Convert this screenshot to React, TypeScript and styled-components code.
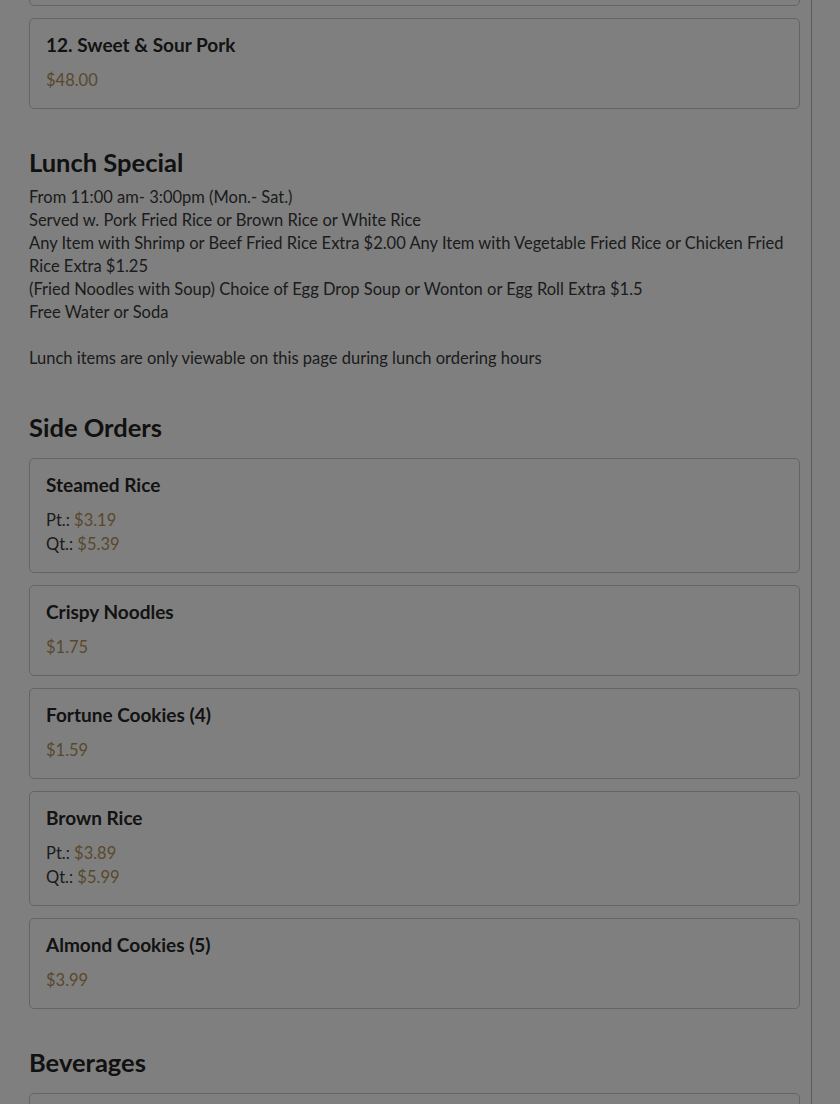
import React from 'react';
import styled, { createGlobalStyle } from 'styled-components';

const GlobalStyle = createGlobalStyle`
  html, body {
    margin: 0;
    padding: 0;
    background: #ffffff;
    font-family: 'Lato', 'Noto Sans', sans-serif;
    color: #383838;
    overflow: hidden;
  }
`;

const Page = styled.div`
  display: flex;
  min-height: 1104px;
`;

const MenuColumn = styled.main`
  box-sizing: border-box;
  width: 812px;
  flex-shrink: 0;
  padding: 0 11px 0 29px;
  border-right: 1px solid #b5b5b5;
  margin-top: -101px;
`;

const Section = styled.section`
  display: flex;
  flex-direction: column;
`;

const SectionTitle = styled.h2`
  margin: 38px 0 0;
  font-size: 25.5px;
  line-height: 30px;
  font-weight: 700;
  color: #222;
`;

const CardList = styled.div`
  display: flex;
  flex-direction: column;
  gap: 12px;
  margin-top: 16px;
`;

const Card = styled.div`
  border: 1px solid #c8c8c8;
  border-radius: 5px;
  padding: 14px 16px 16px;
  background: #fff;
`;

const ItemName = styled.h3`
  margin: 0 0 11px;
  font-size: 19px;
  line-height: 24px;
  font-weight: 700;
  color: #262626;
`;

const PriceRow = styled.div`
  font-size: 16.5px;
  line-height: 24px;
  color: #383838;
`;

const Price = styled.span`
  color: #b39259;
`;

const Notes = styled.div`
  margin: 9px 0 4px;
  font-size: 16.5px;
  line-height: 23px;
  color: #383838;
`;

const Blank = styled.div`
  height: 23px;
`;

// dimmed backdrop laid over the whole page, as in the screenshot
const Backdrop = styled.div`
  position: fixed;
  inset: 0;
  background: rgba(0, 0, 0, 0.5);
`;

type Item = { name: string; prices: { label?: string; value: string }[] };

const topItems: Item[] = [
  { name: '11. Sesame Chicken', prices: [{ value: '$48.00' }] },
  { name: '12. Sweet & Sour Pork', prices: [{ value: '$48.00' }] },
];

const sideOrders: Item[] = [
  { name: 'Steamed Rice', prices: [{ label: 'Pt.:', value: '$3.19' }, { label: 'Qt.:', value: '$5.39' }] },
  { name: 'Crispy Noodles', prices: [{ value: '$1.75' }] },
  { name: 'Fortune Cookies (4)', prices: [{ value: '$1.59' }] },
  { name: 'Brown Rice', prices: [{ label: 'Pt.:', value: '$3.89' }, { label: 'Qt.:', value: '$5.99' }] },
  { name: 'Almond Cookies (5)', prices: [{ value: '$3.99' }] },
];

const beverages: Item[] = [
  { name: 'Soda (Can)', prices: [{ value: '$1.50' }] },
];

const MenuCard: React.FC<{ item: Item }> = ({ item }) => (
  <Card>
    <ItemName>{item.name}</ItemName>
    {item.prices.map((p, i) => (
      <PriceRow key={i}>
        {p.label && <>{p.label} </>}
        <Price>{p.value}</Price>
      </PriceRow>
    ))}
  </Card>
);

const App: React.FC = () => (
  <>
    <GlobalStyle />
    <Page>
      <MenuColumn>
        <CardList>
          {topItems.map(item => <MenuCard key={item.name} item={item} />)}
        </CardList>

        <Section>
          <SectionTitle>Lunch Special</SectionTitle>
          <Notes>
            <div>From 11:00 am- 3:00pm (Mon.- Sat.)</div>
            <div>Served w. Pork Fried Rice or Brown Rice or White Rice</div>
            <div>Any Item with Shrimp or Beef Fried Rice Extra $2.00 Any Item with Vegetable Fried Rice or Chicken Fried Rice Extra $1.25</div>
            <div>(Fried Noodles with Soup) Choice of Egg Drop Soup or Wonton or Egg Roll Extra $1.5</div>
            <div>Free Water or Soda</div>
            <Blank />
            <div>Lunch items are only viewable on this page during lunch ordering hours</div>
          </Notes>
        </Section>

        <Section>
          <SectionTitle>Side Orders</SectionTitle>
          <CardList>
            {sideOrders.map(item => <MenuCard key={item.name} item={item} />)}
          </CardList>
        </Section>

        <Section>
          <SectionTitle>Beverages</SectionTitle>
          <CardList>
            {beverages.map(item => <MenuCard key={item.name} item={item} />)}
          </CardList>
        </Section>
      </MenuColumn>
    </Page>
    <Backdrop />
  </>
);

export default App;
